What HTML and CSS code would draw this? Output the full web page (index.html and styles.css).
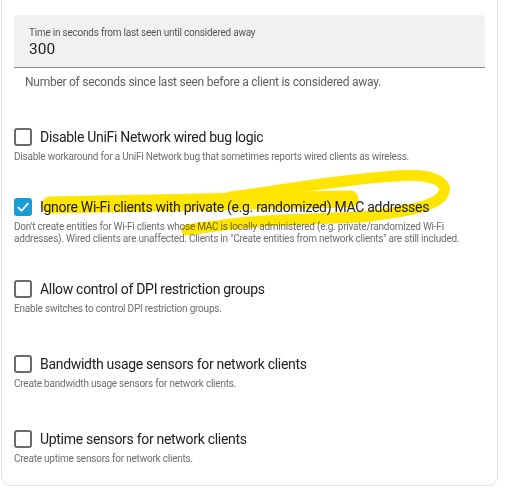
FILE: index.html
```html
<!DOCTYPE html>
<html lang="en">
<head>
<meta charset="utf-8">
<title>UniFi options</title>
<link rel="stylesheet" href="styles.css">
</head>
<body>
<div class="card">
  <div class="field">
    <div class="field-label">Time in seconds from last seen until considered away</div>
    <div class="field-value">300</div>
  </div>
  <div class="helper">Number of seconds since last seen before a client is considered away.</div>

  <div class="option first">
    <div class="check-row"><span class="box"></span><span class="title">Disable UniFi Network wired bug logic</span></div>
    <div class="desc">Disable workaround for a UniFi Network bug that sometimes reports wired clients as wireless.</div>
  </div>

  <div class="option">
    <div class="check-row"><span class="box checked"><svg viewBox="0 0 18 18" width="18" height="18"><polyline points="4.2,9.4 7.6,12.8 13.9,5.6" fill="none" stroke="#fff" stroke-width="1.7" stroke-linecap="round" stroke-linejoin="round"/></svg></span><span class="title">Ignore Wi-Fi clients with private (e.g. randomized) MAC addresses</span></div>
    <div class="desc">Don't create entities for Wi-Fi clients whose MAC is locally administered (e.g. private/randomized Wi-Fi addresses). Wired clients are unaffected. Clients in "Create entities from network clients" are still included.</div>
  </div>

  <div class="option">
    <div class="check-row"><span class="box"></span><span class="title">Allow control of DPI restriction groups</span></div>
    <div class="desc">Enable switches to control DPI restriction groups.</div>
  </div>

  <div class="option wide">
    <div class="check-row"><span class="box"></span><span class="title">Bandwidth usage sensors for network clients</span></div>
    <div class="desc">Create bandwidth usage sensors for network clients.</div>
  </div>

  <div class="option wide">
    <div class="check-row"><span class="box"></span><span class="title">Uptime sensors for network clients</span></div>
    <div class="desc">Create uptime sensors for network clients.</div>
  </div>
</div>

<svg class="scribble" width="509" height="500" viewBox="0 0 509 500">
  <path d="M50,205 C120,203 220,201 350,199" fill="none" stroke="#ffe500" stroke-width="17" stroke-linecap="round"/>
  <path d="M230,197 C290,189 345,179 395,176 C430,173 452,181 442,196 C432,208 400,212 363,217 C320,219 280,219 240,223 C215,226 198,228 187,230" fill="none" stroke="#ffe500" stroke-width="11" stroke-linecap="round" stroke-linejoin="round"/>
</svg>
</body>
</html>
```

FILE: styles.css
```css
html, body {
  margin: 0;
  padding: 0;
  background: #ffffff;
}

body {
  position: relative;
  font-family: Roboto, "Liberation Sans", Arial, sans-serif;
  color: #212121;
  width: 509px;
  height: 500px;
  overflow: hidden;
}

.card {
  box-sizing: border-box;
  width: 497px;
  margin: -20px 0 0 1px;
  padding: 34px 12px 20px 12px;
  border: 1px solid #e0e0e0;
  border-radius: 10px;
  background: #ffffff;
}

.field {
  box-sizing: border-box;
  height: 53px;
  background: #f1f1f1;
  border-radius: 4px 4px 0 0;
  border-bottom: 1px solid #8c8c8c;
  padding: 11px 15px 0 15px;
}

.field-label {
  font-size: 10px;
  line-height: 14px;
  letter-spacing: -0.23px;
  color: #555555;
}

.field-value {
  font-size: 15.5px;
  line-height: 18px;
  color: #212121;
}

.helper {
  font-size: 12px;
  line-height: 16px;
  letter-spacing: -0.26px;
  color: #5e5e5e;
  padding: 6px 0 0 11px;
}

.option {
  margin-top: 35px;
}

.option.first {
  margin-top: 38px;
}

.option.wide {
  margin-top: 40px;
}

.check-row {
  display: flex;
  align-items: center;
  gap: 8px;
  height: 18px;
}

.box {
  box-sizing: border-box;
  flex: none;
  width: 18px;
  height: 18px;
  border: 2px solid #6b6b6b;
  border-radius: 3px;
  display: flex;
}

.box.checked {
  border: none;
  background: #1a9ad6;
}

.title {
  font-size: 14px;
  line-height: 18px;
  letter-spacing: -0.3px;
  color: #212121;
  white-space: nowrap;
}

.desc {
  margin-top: 5px;
  font-size: 10px;
  line-height: 12px;
  letter-spacing: -0.22px;
  color: #6e6e6e;
}

.scribble {
  position: absolute;
  left: 0;
  top: 0;
  mix-blend-mode: multiply;
  pointer-events: none;
}
```
